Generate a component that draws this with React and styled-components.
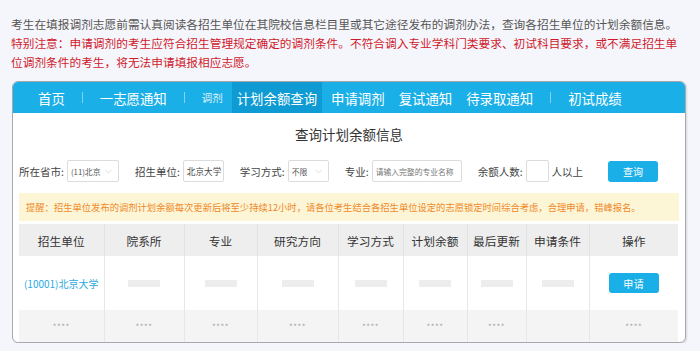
import React from 'react'
import styled, { createGlobalStyle } from 'styled-components'
import { ChevronDown } from 'lucide-react'

const GlobalStyle = createGlobalStyle`
  body {
    margin: 0;
    background: #f5f6fb;
    font-family: "Noto Sans CJK SC", "Noto Sans", sans-serif;
  }
`

const Page = styled.div`
  padding: 14px 0 0 11px;
  width: 674px;
`

const Intro = styled.p`
  margin: 0;
  font-size: 11.7px;
  line-height: 19px;
  color: ${(p) => (p.warn ? '#d0192c' : '#555')};
`

const Card = styled.div`
  margin: 10px 0 0 1px;
  width: 672px;
  border: 1px solid #a9a9ad;
  border-radius: 6px;
  background: #fff;
  overflow: hidden;
  box-shadow: 1px 1px 2px rgba(0, 0, 0, 0.12);
`

const Nav = styled.div`
  display: flex;
  align-items: center;
  gap: 4px;
  height: 31px;
  padding-left: 20px;
  background: #1bafe7;
`

const NavItem = styled.div`
  display: flex;
  align-items: center;
  height: 100%;
  padding: 0 5px;
  color: #fff;
  font-size: ${(p) => (p.small ? '10.5px' : '13.4px')};
  opacity: ${(p) => (p.small ? 0.85 : 1)};
  background: ${(p) => (p.active ? '#0e9bd3' : 'transparent')};
`

const NavSep = styled.div`
  width: 1px;
  height: 11px;
  margin: 0 8px;
  background: #86d3f1;
`

const Body = styled.div`
  padding: 0 6px;
`

const Title = styled.h2`
  margin: 11px 0 0;
  text-align: center;
  font-size: 13.5px;
  line-height: 20px;
  font-weight: normal;
  color: #333;
`

const Filters = styled.div`
  display: flex;
  align-items: center;
  gap: 16px;
  margin-top: 16px;
  height: 22px;
`

const Field = styled.div`
  display: flex;
  align-items: center;
  gap: 3px;
  margin-right: ${(p) => p.$mr || 0}px;
`

const Label = styled.span`
  font-size: 10.5px;
  color: #444;
  white-space: nowrap;
`

const Select = styled.div`
  display: flex;
  align-items: center;
  justify-content: space-between;
  box-sizing: border-box;
  width: ${(p) => p.$w}px;
  height: 22px;
  padding: 0 4px 0 3px;
  border: 1px solid #dcdcdc;
  border-radius: 2px;
  font-size: 7.8px;
  color: #555;
`

const Input = styled.div`
  display: flex;
  align-items: center;
  box-sizing: border-box;
  width: ${(p) => p.$w}px;
  height: 22px;
  padding: 0 3px;
  border: 1px solid #dcdcdc;
  border-radius: 2px;
  font-size: ${(p) => (p.placeholder ? '7.8px' : '8.6px')};
  color: ${(p) => (p.placeholder ? '#777' : '#444')};
  white-space: nowrap;
  overflow: hidden;
`

const Button = styled.div`
  display: flex;
  align-items: center;
  justify-content: center;
  width: 50px;
  height: ${(p) => p.$h || 21}px;
  border-radius: 3px;
  background: #1bafe7;
  color: #fff;
  font-size: 10px;
  margin: ${(p) => p.$center ? '0 auto' : '0'};
`

const Notice = styled.div`
  margin-top: 11px;
  height: 28px;
  display: flex;
  align-items: center;
  padding-left: 7px;
  background: #fdf6d6;
  color: #f0882a;
  font-size: 9.3px;
`

const Table = styled.table`
  margin-top: 3px;
  width: 659px;
  border-collapse: collapse;
  table-layout: fixed;
`

const Th = styled.th`
  height: 32px;
  padding: 0;
  background: #eeeeee;
  border-left: 1px solid #e2e2e2;
  font-size: 11.7px;
  font-weight: normal;
  color: #333;
  &:first-child { border-left: none; }
`

const Td = styled.td`
  height: ${(p) => (p.muted ? 32 : 54)}px;
  padding: 0;
  text-align: center;
  border-left: 1px solid #e6e6e6;
  background: ${(p) => (p.muted ? '#f4f4f4' : '#fff')};
  color: #a5a5a5;
  font-size: 8px;
  letter-spacing: 0.5px;
  &:first-child { border-left: none; }
`

const School = styled.span`
  color: #29a9e3;
  font-size: 10px;
  letter-spacing: 0;
`

const Placeholder = styled.div`
  width: 32px;
  height: 7px;
  margin: 0 auto;
  background: #ededed;
`

const widths = [85, 80, 73, 81, 65, 64, 59, 63, 89]
const heads = ['招生单位', '院系所', '专业', '研究方向', '学习方式', '计划余额', '最后更新', '申请条件', '操作']

const App = () => {
  return (
    <Page>
      <GlobalStyle />
      <Intro>考生在填报调剂志愿前需认真阅读各招生单位在其院校信息栏目里或其它途径发布的调剂办法，查询各招生单位的计划余额信息。</Intro>
      <Intro warn>特别注意：申请调剂的考生应符合招生管理规定确定的调剂条件。不符合调入专业学科门类要求、初试科目要求，或不满足招生单位调剂条件的考生，将无法申请填报相应志愿。</Intro>

      <Card>
        <Nav>
          <NavItem>首页</NavItem>
          <NavSep />
          <NavItem>一志愿通知</NavItem>
          <NavSep />
          <NavItem small>调剂</NavItem>
          <NavItem active>计划余额查询</NavItem>
          <NavItem>申请调剂</NavItem>
          <NavItem>复试通知</NavItem>
          <NavItem>待录取通知</NavItem>
          <NavSep />
          <NavItem>初试成绩</NavItem>
        </Nav>

        <Body>
          <Title>查询计划余额信息</Title>

          <Filters>
            <Field>
              <Label>所在省市:</Label>
              <Select $w={52}>(11)北京<ChevronDown size={11} strokeWidth={1} color="#bbb" /></Select>
            </Field>
            <Field>
              <Label>招生单位:</Label>
              <Input $w={41}>北京大学</Input>
            </Field>
            <Field>
              <Label>学习方式:</Label>
              <Select $w={41}>不限<ChevronDown size={11} strokeWidth={1} color="#bbb" /></Select>
            </Field>
            <Field>
              <Label>专业:</Label>
              <Input $w={90} placeholder="1">请输入完整的专业名称</Input>
            </Field>
            <Field $mr={9}>
              <Label>余额人数:</Label>
              <Input $w={23} />
              <Label>人以上</Label>
            </Field>
            <Button>查询</Button>
          </Filters>

          <Notice>提醒：招生单位发布的调剂计划余额每次更新后将至少持续12小时，请各位考生结合各招生单位设定的志愿锁定时间综合考虑，合理申请，错峰报名。</Notice>

          <Table>
            <colgroup>
              {widths.map((w, i) => <col key={i} style={{ width: w }} />)}
            </colgroup>
            <thead>
              <tr>
                {heads.map((h) => <Th key={h}>{h}</Th>)}
              </tr>
            </thead>
            <tbody>
              <tr>
                <Td><School>(10001)北京大学</School></Td>
                {[1, 2, 3, 4, 5, 6, 7].map((i) => <Td key={i}><Placeholder /></Td>)}
                <Td><Button $center $h={20}>申请</Button></Td>
              </tr>
              <tr>
                {heads.map((h) => <Td muted key={h}>{h === '申请条件' ? '' : '****'}</Td>)}
              </tr>
            </tbody>
          </Table>
        </Body>
      </Card>
    </Page>
  )
}

export default App
